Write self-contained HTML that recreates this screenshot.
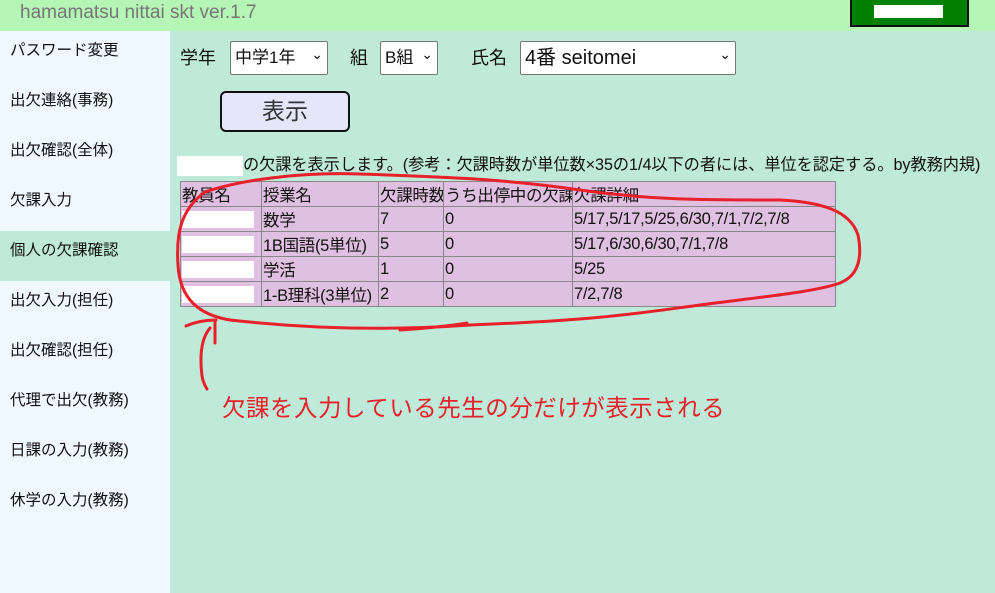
<!DOCTYPE html>
<html><head><meta charset="utf-8"><style>
*{margin:0;padding:0;box-sizing:border-box}
body{width:995px;height:593px;overflow:hidden;background:#bfead9;font-family:"Liberation Sans","Noto Sans CJK JP",sans-serif;position:relative;color:#111}
.hdr{position:absolute;left:0;top:0;width:995px;height:31px;background:#b5f5b5}
.hdr span{position:absolute;left:20px;top:2px;font-size:19px;color:#777}
.gb{position:absolute;left:850px;top:-2px;width:119px;height:29px;background:#008000;border:2px solid #111}
.gb i{position:absolute;left:22px;top:5px;width:69px;height:13px;background:#fff}
.side{position:absolute;left:0;top:31px;width:170px;height:562px;background:#f0f8ff}
.side div{height:50px;line-height:40px;padding-left:10px;font-size:15.5px}
.side .act{background:#bfead9}
.a{position:absolute;font-size:17px}
.sel{position:absolute;top:41px;height:34px;background:#fff;border:1px solid #767676;border-radius:2px;font-size:17px;line-height:32px;padding-left:4px}
.sel:after{content:"⌄";position:absolute;right:4px;top:-4px;font-size:14px}
.btn{position:absolute;left:220px;top:91px;width:130px;height:41px;background:#e6e6fa;border:2px solid #111;border-radius:6px;text-align:center;line-height:36px;font-size:23px;color:#333}
table{position:absolute;left:180px;top:181px;border-collapse:collapse;background:#e0c0e0;font-size:16.5px;table-layout:fixed;width:655px}
td{border:1px solid #888;height:25px;padding:0 1px;white-space:nowrap;overflow:hidden;letter-spacing:-0.3px}
.w{display:inline-block;width:72px;height:17px;background:#fff;vertical-align:middle}
</style></head><body>
<div class="hdr"><span>hamamatsu nittai skt ver.1.7</span><div class="gb"><i></i></div></div>
<div class="side">
<div>パスワード変更</div><div>出欠連絡(事務)</div><div>出欠確認(全体)</div><div>欠課入力</div><div class="act">個人の欠課確認</div><div>出欠入力(担任)</div><div>出欠確認(担任)</div><div>代理で出欠(教務)</div><div>日課の入力(教務)</div><div>休学の入力(教務)</div>
</div>
<div class="a" style="left:180px;top:44px;font-size:18px">学年</div>
<div class="sel" style="left:230px;width:98px">中学1年</div>
<div class="a" style="left:350px;top:44px;font-size:18px">組</div>
<div class="sel" style="left:380px;width:58px">B組</div>
<div class="a" style="left:471px;top:44px;font-size:18px">氏名</div>
<div class="sel" style="left:520px;width:216px;font-size:20px">4番 seitomei</div>
<div class="btn">表示</div>
<div class="a" style="left:177px;top:151px;font-size:16.2px;white-space:nowrap;letter-spacing:-0.05px"><span style="display:inline-block;width:66px;height:20px;background:#fff;vertical-align:middle"></span>の欠課を表示します。(参考：欠課時数が単位数×35の1/4以下の者には、単位を認定する。by教務内規)</div>
<table>
<colgroup><col style="width:81px"><col style="width:117px"><col style="width:65px"><col style="width:129px"><col style="width:263px"></colgroup>
<tr><td>教員名</td><td>授業名</td><td>欠課時数</td><td>うち出停中の欠課</td><td>欠課詳細</td></tr>
<tr><td><span class="w"></span></td><td>数学</td><td>7</td><td>0</td><td>5/17,5/17,5/25,6/30,7/1,7/2,7/8</td></tr>
<tr><td><span class="w"></span></td><td>1B国語(5単位)</td><td>5</td><td>0</td><td>5/17,6/30,6/30,7/1,7/8</td></tr>
<tr><td><span class="w"></span></td><td>学活</td><td>1</td><td>0</td><td>5/25</td></tr>
<tr><td><span class="w"></span></td><td>1-B理科(3単位)</td><td>2</td><td>0</td><td>7/2,7/8</td></tr>
</table>
<svg width="995" height="593" style="position:absolute;left:0;top:0" fill="none" stroke="#e8202a" stroke-width="3" stroke-linecap="round">
<path d="M205,192 C240,180 300,172 360,174 C420,176 500,178 580,190 C650,200 700,200 780,200 C820,202 850,210 858,235 C862,255 860,275 840,283 C815,292 760,297 700,305 C640,313 600,320 470,325 C400,330 320,330 230,320 C200,315 180,300 178,265 C176,235 180,210 205,192"/>
<path d="M215,320 L215,343"/>
<path d="M186,326 C195,322 205,320 216,320"/>
<path d="M210,328 C200,340 200,360 202,376 C203,382 205,386 207,389"/>
<path d="M400,330 C430,328 450,326 467,323"/>
</svg>
<div class="a" style="left:222px;top:389px;font-size:23.5px;color:#e8202a;letter-spacing:0.5px">欠課を入力している先生の分だけが表示される</div>
</body></html>
